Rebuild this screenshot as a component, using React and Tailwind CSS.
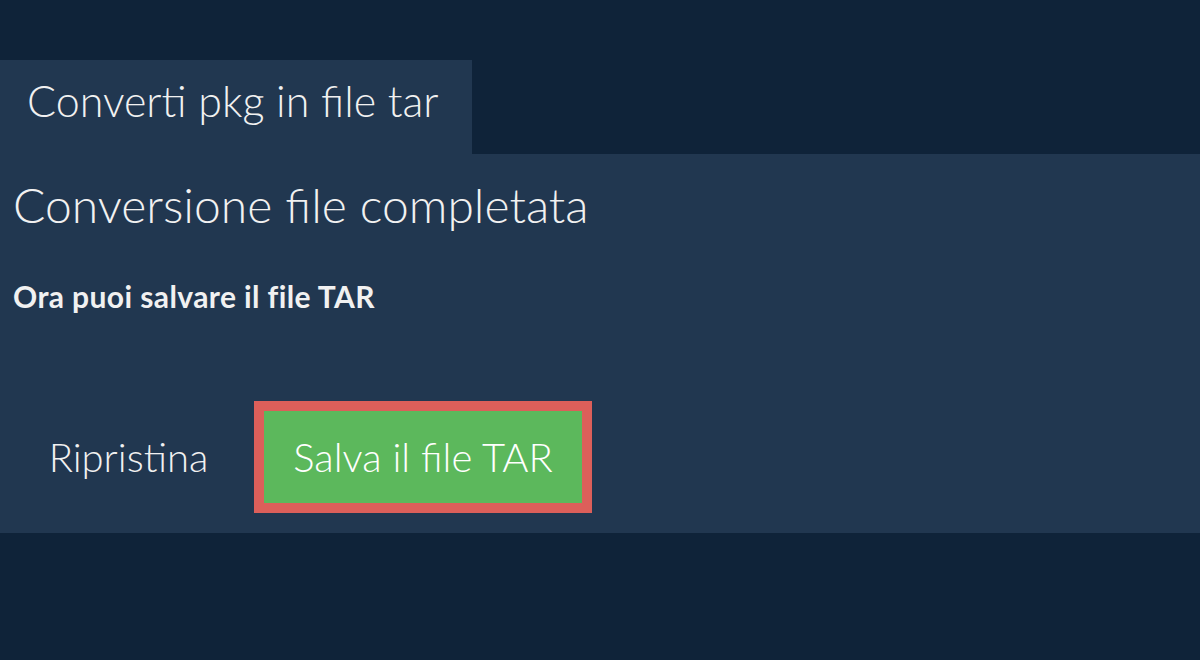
import React from "react";

export default function App() {
  return (
    <div
      className="w-full h-[660px] bg-[#0f2339] pt-[60px] text-[#f1f1f1]"
      style={{ fontFamily: "Lato, 'Open Sans', sans-serif" }}
    >
      {/* Tab */}
      <div className="w-[472px] h-[94px] bg-[#213750] pl-[27px] pt-[15px]">
        <span className="block text-[43px] font-light leading-[1.2]">
          Converti pkg in file tar
        </span>
      </div>

      {/* Panel */}
      <div className="h-[379px] bg-[#213750] px-[13px] pt-[22px]">
        <h2 className="text-[48px] font-light leading-[1.2]">
          Conversione file completata
        </h2>
        <p className="mt-[44px] text-[30px] font-bold leading-[1.2] tracking-[0.4px]">
          Ora puoi salvare il file TAR
        </p>

        <div className="mt-[87px] flex items-center">
          <button className="w-[241px] pr-[10px] text-[40px] font-light leading-[1.2]">
            Ripristina
          </button>
          <button className="w-[338px] h-[112px] border-[10px] border-[#dc5f5a] bg-[#5cb85c] text-[40px] font-light leading-[1.2] text-white">
            Salva il file TAR
          </button>
        </div>
      </div>
    </div>
  );
}
